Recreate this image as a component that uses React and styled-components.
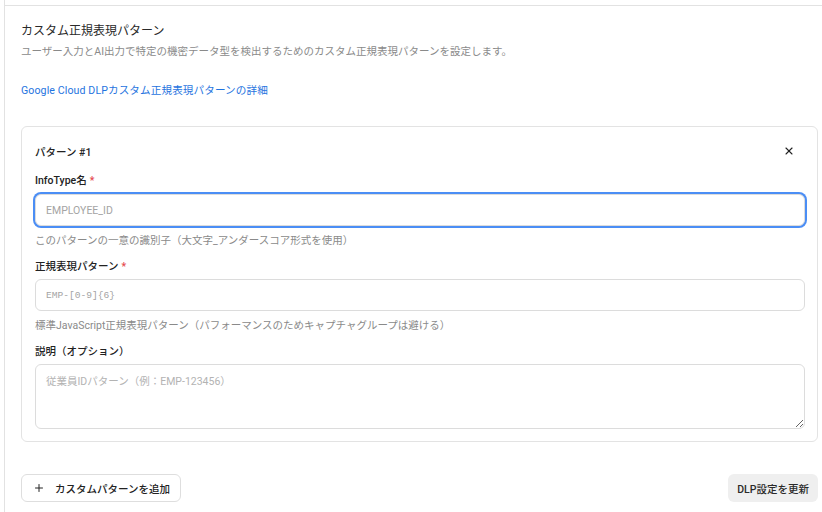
import React from 'react'
import styled, { createGlobalStyle } from 'styled-components'

const GlobalStyle = createGlobalStyle`
  html, body {
    margin: 0;
    padding: 0;
    background: #fff;
  }
  body {
    font-family: Roboto, "Noto Sans CJK JP", sans-serif;
    color: #222;
  }
  * { box-sizing: border-box; }
`

const Frame = styled.div`
  margin-left: 4px;
  border-left: 1px solid #e2e2e2;
  min-height: 512px;
  padding-top: 5px;
`

const Section = styled.section`
  border-top: 1px solid #e2e2e2;
  padding: 16px 4px 10px 16px;
`

const Title = styled.h2`
  margin: 0;
  font-size: 12px;
  line-height: 18px;
  font-weight: 400;
  color: #2a2a2a;
`

const Description = styled.p`
  margin: 4px 0 0;
  font-size: 10.5px;
  line-height: 16px;
  color: #8a8a8a;
`

const DocLink = styled.a`
  display: inline-block;
  margin-top: 23px;
  font-size: 10.6px;
  line-height: 16px;
  letter-spacing: 0.1px;
  color: #1f74e0;
  text-decoration: none;
`

const Card = styled.div`
  margin-top: 27px;
  border: 1px solid #e3e3e3;
  border-radius: 6px;
  padding: 12px 12px 12px 13px;
  display: flex;
  flex-direction: column;
  gap: 10px;
`

const CardHeader = styled.div`
  display: flex;
  align-items: center;
  justify-content: space-between;
  height: 24px;
`

const CardTitle = styled.span`
  font-size: 10.5px;
  font-weight: 500;
  color: #222;
`

const CloseButton = styled.button`
  width: 24px;
  height: 24px;
  border: none;
  background: transparent;
  display: flex;
  align-items: center;
  justify-content: center;
  padding: 0;
  margin-right: 4px;
  cursor: pointer;
  color: #222;
`

const Field = styled.div`
  display: flex;
  flex-direction: column;
`

const Label = styled.label`
  font-size: 10.5px;
  line-height: 16px;
  font-weight: 500;
  color: #222;
  margin-bottom: ${props => props.tight ? "5px" : "4px"};
  & > span {
    color: #e5484d;
    margin-left: 3px;
  }
`

const Input = styled.input`
  height: 32px;
  border: 1px solid #dcdcdc;
  border-radius: 6px;
  padding: 0 10px;
  font-family: ${props => props.mono ? '"Liberation Mono", "DejaVu Sans Mono", monospace' : 'Roboto, "Noto Sans CJK JP", sans-serif'};
  font-size: ${props => props.mono ? "9.6px" : "10.5px"};
  color: #222;
  outline: none;
  background: #fff;
  box-shadow: ${props => props.focused ? "0 0 0 2px #4b8ef5" : "none"};
  &::placeholder {
    color: #a4a4a4;
  }
`

const TextArea = styled.textarea`
  height: 65px;
  border: 1px solid #dcdcdc;
  border-radius: 6px;
  padding: 9px 10px;
  font-family: Roboto, "Noto Sans CJK JP", sans-serif;
  font-size: 10.5px;
  line-height: 16px;
  outline: none;
  &::placeholder {
    color: #b3b3b3;
  }
`

const Helper = styled.p`
  margin: 7px 0 0;
  font-size: 10.5px;
  line-height: 16px;
  color: #8a8a8a;
`

const Footer = styled.div`
  margin-top: 32px;
  display: flex;
  justify-content: space-between;
  align-items: center;
`

const OutlineButton = styled.button`
  height: 28px;
  display: inline-flex;
  align-items: center;
  gap: 10px;
  padding: 0 10px 0 11px;
  border: 1px solid #dedede;
  border-radius: 6px;
  background: #fff;
  font-family: Roboto, "Noto Sans CJK JP", sans-serif;
  font-size: 10.5px;
  font-weight: 500;
  color: #222;
  cursor: pointer;
`

const SoftButton = styled.button`
  height: 28px;
  padding: 0 9px;
  border: none;
  border-radius: 6px;
  background: #efefef;
  font-family: Roboto, "Noto Sans CJK JP", sans-serif;
  font-size: 10.5px;
  font-weight: 500;
  color: #2a2a2a;
  cursor: pointer;
`

const XIcon = () => (
  <svg width="12" height="12" viewBox="0 0 24 24" fill="none" stroke="currentColor" strokeWidth="2.2" strokeLinecap="round">
    <path d="M18 6 6 18" />
    <path d="m6 6 12 12" />
  </svg>
)

const PlusIcon = () => (
  <svg width="12" height="12" viewBox="0 0 24 24" fill="none" stroke="currentColor" strokeWidth="2" strokeLinecap="round">
    <path d="M5 12h14" />
    <path d="M12 5v14" />
  </svg>
)

export default function App() {
  return (
    <Frame>
      <GlobalStyle />
      <Section>
        <Title>カスタム正規表現パターン</Title>
        <Description>
          ユーザー入力とAI出力で特定の機密データ型を検出するためのカスタム正規表現パターンを設定します。
        </Description>
        <DocLink href="#">Google Cloud DLPカスタム正規表現パターンの詳細</DocLink>

        <Card>
          <CardHeader>
            <CardTitle>パターン #1</CardTitle>
            <CloseButton aria-label="削除"><XIcon /></CloseButton>
          </CardHeader>

          <Field>
            <Label tight>InfoType名<span>*</span></Label>
            <Input focused placeholder="EMPLOYEE_ID" />
            <Helper>このパターンの一意の識別子（大文字_アンダースコア形式を使用）</Helper>
          </Field>

          <Field>
            <Label>正規表現パターン<span>*</span></Label>
            <Input mono placeholder="EMP-[0-9]{6}" />
            <Helper>標準JavaScript正規表現パターン（パフォーマンスのためキャプチャグループは避ける）</Helper>
          </Field>

          <Field>
            <Label>説明（オプション）</Label>
            <TextArea placeholder="従業員IDパターン（例：EMP-123456）" />
          </Field>
        </Card>

        <Footer>
          <OutlineButton><PlusIcon />カスタムパターンを追加</OutlineButton>
          <SoftButton>DLP設定を更新</SoftButton>
        </Footer>
      </Section>
    </Frame>
  )
}
